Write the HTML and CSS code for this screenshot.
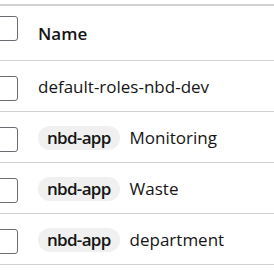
FILE: index.html
```html
<!DOCTYPE html>
<html lang="en">
<head>
    <meta charset="UTF-8">
    <meta name="viewport" content="width=device-width, initial-scale=1.0">
    <title>Roles</title>
    <link rel="stylesheet" href="styles.css">
</head>
<body>
    <table class="roles-table">
        <thead>
            <tr>
                <td class="check-cell"><span class="check-box head-box"></span></td>
                <th>Name</th>
            </tr>
        </thead>
        <tbody>
            <tr>
                <td class="check-cell"><span class="check-box"></span></td>
                <td>default-roles-nbd-dev</td>
            </tr>
            <tr>
                <td class="check-cell"><span class="check-box"></span></td>
                <td><span class="client-badge">nbd-app</span>Monitoring</td>
            </tr>
            <tr>
                <td class="check-cell"><span class="check-box"></span></td>
                <td><span class="client-badge">nbd-app</span>Waste</td>
            </tr>
            <tr>
                <td class="check-cell"><span class="check-box"></span></td>
                <td><span class="client-badge">nbd-app</span>department</td>
            </tr>
        </tbody>
    </table>
</body>
</html>
```

FILE: styles.css
```css
body {
    margin: 0;
    padding-top: 4px;
    font-family: 'Open Sans', sans-serif;
    background: #fff;
    color: #151515;
    overflow: hidden;
}

.roles-table {
    border-collapse: collapse;
    border-top: 2px solid #d2d2d2;
    width: calc(100% + 20px);
    margin-left: -20px;
}

.roles-table td,
.roles-table th {
    height: 49px;
    padding: 1px 0 0;
    border-bottom: 1px solid #d2d2d2;
    font-size: 17px;
    text-align: left;
    vertical-align: middle;
}

.roles-table th {
    height: 53px;
    font-weight: 600;
}

.check-cell {
    width: 58px;
}

.check-box {
    display: block;
    width: 24px;
    height: 23px;
    margin: 3px 0 0 12px;
    border: 1px solid #6a6e73;
    border-radius: 3px;
}

.head-box {
    margin-top: 0;
    margin-bottom: 10px;
}

.client-badge {
    display: inline-block;
    padding: 1px 9px;
    margin-right: 10px;
    line-height: 22px;
    border-radius: 12px;
    background: #f0f0f0;
    font-weight: 600;
    letter-spacing: -0.7px;
}
```
